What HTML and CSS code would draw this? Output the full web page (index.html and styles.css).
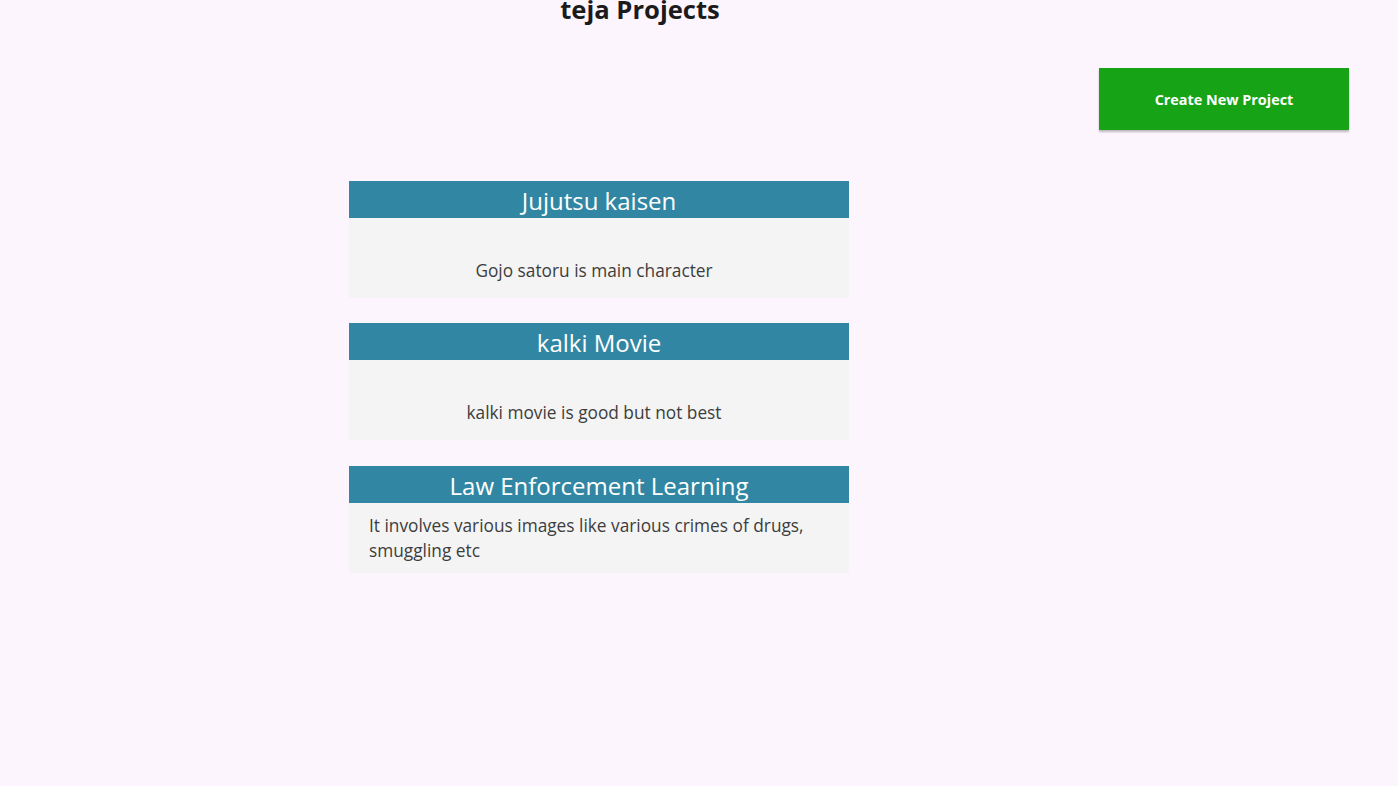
FILE: index.html
```html
<!DOCTYPE html>
<html lang="en">
<head>
<meta charset="utf-8">
<title>teja Projects</title>
<link rel="stylesheet" href="styles.css">
</head>
<body>
  <header class="page-header">
    <h1 class="page-title">teja Projects</h1>
  </header>
  <div class="actions">
    <button class="create-btn">Create New Project</button>
  </div>
  <main class="projects">
    <section class="card">
      <h2 class="card-title">Jujutsu kaisen</h2>
      <div class="card-body card-body--short">
        <p class="card-text centered">Gojo satoru is main character</p>
      </div>
    </section>
    <section class="card">
      <h2 class="card-title">kalki Movie</h2>
      <div class="card-body card-body--short">
        <p class="card-text centered">kalki movie is good but not best</p>
      </div>
    </section>
    <section class="card">
      <h2 class="card-title">Law Enforcement Learning</h2>
      <div class="card-body">
        <p class="card-text">It involves various images like various crimes of drugs, smuggling etc</p>
      </div>
    </section>
  </main>
</body>
</html>
```
FILE: styles.css
```css
* { box-sizing: border-box; }
html, body {
  margin: 0;
  padding: 0;
  background: #fdf5fd;
  font-family: "Open Sans", "Noto Sans", sans-serif;
  color: #3a3a3a;
}
body { min-height: 786px; }

.page-header {
  width: 1280px;
  text-align: center;
}
.page-title {
  margin: 0;
  margin-top: -8px;
  font-size: 25.6px;
  line-height: 36px;
  font-weight: 700;
  color: #1b1b1b;
}

.actions {
  display: flex;
  justify-content: flex-end;
  padding-right: 49px;
  margin-top: 40px;
}
.create-btn {
  width: 250px;
  height: 62px;
  padding-top: 2px;
  border: none;
  background: #16a316;
  color: #fff;
  font-family: inherit;
  font-size: 14.4px;
  font-weight: 700;
  box-shadow: 0 2px 2px rgba(0,0,0,0.25);
  cursor: pointer;
}

.projects {
  width: 1198px;
  margin-top: 50.5px;
  display: flex;
  flex-direction: column;
  align-items: center;
  gap: 25.5px;
}
.card {
  width: 500px;
  background: #f4f4f4;
}
.card-title {
  margin: 0;
  height: 37px;
  background: #3187a3;
  color: #fff;
  font-size: 24px;
  font-weight: 400;
  line-height: 40px;
  text-align: center;
}
.card-body {
  padding: 10px 20px;
}
.card-body--short {
  height: 80px;
  padding: 40px 30px 0 20px;
}
.card-text {
  margin: 0;
  font-size: 17.3px;
  line-height: 25px;
  color: #3d3d3d;
}
.centered { text-align: center; }
```
